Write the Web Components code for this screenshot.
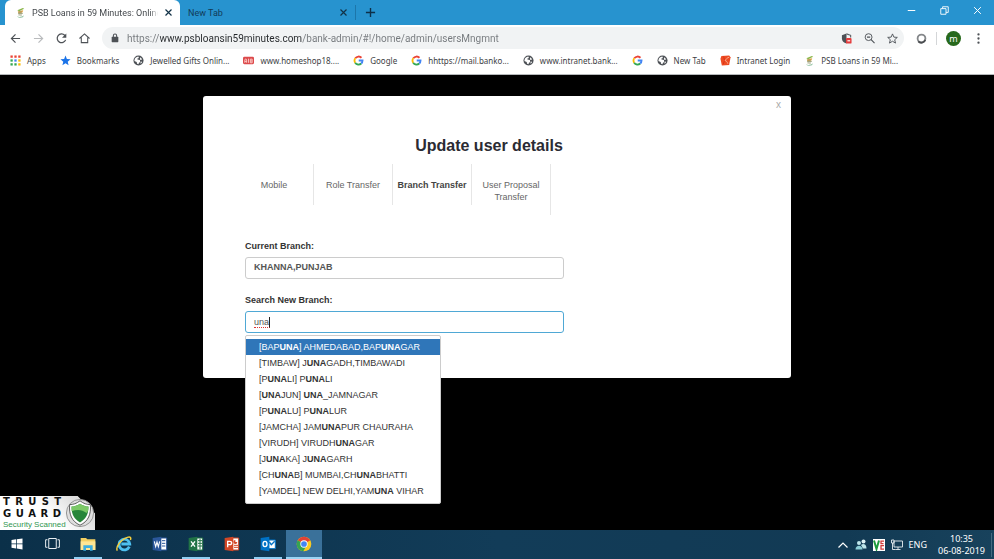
<!DOCTYPE html>
<html lang="en">
<head>
<meta charset="utf-8">
<meta name="viewport" content="width=device-width, initial-scale=1">
<title>PSB Loans in 59 Minutes</title>
<style>
html,body{margin:0;height:100%;background:#000}
body{font-family:"Noto Sans","Open Sans",sans-serif;color:#3c4043}
</style>
</head>
<body>
<desktop-screen>
  <tab-strip slot="top"></tab-strip>
  <address-bar slot="top"></address-bar>
  <bookmarks-bar slot="top"></bookmarks-bar>
  <update-dialog heading="Update user details">
    <step-tabs></step-tabs>
    <branch-field label="Current Branch:" value="KHANNA,PUNJAB" readonly></branch-field>
    <branch-field label="Search New Branch:" value="una" active>
      <suggestion-list query="UNA"></suggestion-list>
    </branch-field>
  </update-dialog>
  <trust-badge></trust-badge>
  <task-bar slot="bottom"></task-bar>
</desktop-screen>
<script>
const globe='<circle cx="12" cy="12" r="11" fill="#4d5156"/><path d="M4 8c3-4 6-5 9-4l-1 3-3 1 1 2 5 1 1 4-3 2-1 3-3-1-1-4-5-2zM16 5l4 4-3 2-2-2zM18 14l2 1-3 4-1-2z" fill="#fff"/>';
const psb='<path d="M5 7 17 2l3 2-11 5z" fill="#8ab648"/><path d="M6 10l12-3-2 5-8 2z" fill="#e3a23c"/><path d="M9 9v10M13 8v12M7 14h10" stroke="#9aa07a" stroke-width="2" fill="none"/><path d="M4 20c5 3 11 2 15-2l-1 4c-4 2-10 2-14-2z" fill="#8fc0a0"/>';
const office=(c,l)=>`<path d="M12 3h10v18H12z" fill="#fff" stroke="${c}" stroke-width="1.5"/><path d="M1 3 14 1v22L1 21z" fill="${c}"/>${l}`;
const ICONS={
 back:'<path d="M22 12H3M12 3l-9 9 9 9" fill="none" stroke="currentColor" stroke-width="2.6"/>',
 forward:'<path d="M2 12h19M12 3l9 9-9 9" fill="none" stroke="currentColor" stroke-width="2.6"/>',
 reload:'<path d="M21 15a9.500 9.500 0 1 1-2-10l2 2" fill="none" stroke="currentColor" stroke-width="2.7"/><path d="M22.500 1v9.500H13z" fill="currentColor"/>',
 home:'<path d="M1 12 12 2l11 10M5 10v11h14V10" fill="none" stroke="currentColor" stroke-width="2.3"/>',
 lock:'<rect x="4" y="9" width="16" height="13" rx="1.500" fill="currentColor"/><path d="M8 10V6.500a4 4 0 0 1 8 0V10" fill="none" stroke="currentColor" stroke-width="2.5"/>',
 close:'<path d="M4 4l16 16M20 4 4 20" fill="none" stroke="currentColor" stroke-width="3.200"/>',
 winclose:'<path d="M3 3l18 18M21 3 3 21" fill="none" stroke="currentColor" stroke-width="2.600"/>',
 plus:'<path d="M12 2v20M2 12h20" fill="none" stroke="currentColor" stroke-width="3"/>',
 minimize:'<path d="M2 12h20" fill="none" stroke="currentColor" stroke-width="2.600"/>',
 restore:'<path d="M2 7h14v15H2zM7 7V2h15v15h-6" fill="none" stroke="currentColor" stroke-width="2.400"/>',
 shield:'<path d="M12 1 2 5v7c0 6 4 9 10 11z" fill="#4d5156"/><path d="M12 2l9 3v5" fill="none" stroke="#5f6368" stroke-width="2.500"/><rect x="11" y="11" width="12" height="12" rx="2" fill="#e43b3b"/><path d="M14 17h6" stroke="#fff" stroke-width="2.500"/>',
 zoom:'<circle cx="10" cy="9" r="7.500" fill="none" stroke="currentColor" stroke-width="2"/><path d="M6.500 9h7M15 14l8 8" stroke="currentColor" stroke-width="2.300"/>',
 star:'<path d="M12 2l3 7 7.500.6-5.700 5 1.800 7.400-6.600-4-6.600 4 1.800-7.400-5.700-5L9 9z" fill="none" stroke="currentColor" stroke-width="2"/>',
 bluestar:'<path d="M12 1l3 7.500 8 .7-6.200 5.300 2 8L12 18.200l-6.800 4.300 2-8L1 9.200l8-.7z" fill="#1a73e8"/>',
 ring:'<circle cx="12" cy="12" r="8.500" fill="#fff" stroke="#85888b" stroke-width="4"/><path d="M5 18.500A9 9 0 0 0 20 15" fill="none" stroke="#4a4d50" stroke-width="4"/>',
 menu:'<circle cx="12" cy="3" r="2.500" fill="currentColor"/><circle cx="12" cy="12" r="2.500" fill="currentColor"/><circle cx="12" cy="21" r="2.500" fill="currentColor"/>',
 apps:['#ea4335','#ea4335','#ea4335','#34a853','#4285f4','#fbbc05','#34a853','#34a853','#fbbc05'].map((c,i)=>`<rect x="${1+(i%3)*8.500}" y="${1+Math.floor(i/3)*8.500}" width="5" height="5" fill="${c}"/>`).join(''),
 globe,psb,
 shop:'<rect x="0" y="4" width="24" height="16" rx="3" fill="#dc4a4c"/><path d="M4 17v-6c0-3 4-3 4 0v6M4 14h4M12 8v9M16 9h4v4h-4zm0 4v4h4v-4" fill="none" stroke="#ffd9d4" stroke-width="1.800"/>',
 google:'<g fill="none" stroke-width="4"><path d="M5 7.200A8.700 8.700 0 0 1 18.500 6" stroke="#ea4335"/><path d="M4.700 16.800a8.700 8.700 0 0 1 .3-9.600" stroke="#fbbc05"/><path d="M18 18.500a8.700 8.700 0 0 1-13.300-1.700" stroke="#34a853"/><path d="M12.500 12h8.300c0 3-1 5-2.800 6.500" stroke="#4285f4"/></g>',
 bob:'<path d="M3 2l17-1 3 4-3 17-16 1L1 8z" fill="#ed4b23"/><path d="M8 3l2 9-3 8" fill="none" stroke="#d92f14" stroke-width="2"/><path d="M20 5c-5 1-6 4-9 7 3 1 5 3 6 7" fill="none" stroke="#ffc9ae" stroke-width="1.600"/>',
 windows:'<path d="M1 4l9-1.300V11H1zM11.500 2.500 23 1v10H11.500zM1 12.500h9v8.300L1 19.500zM11.500 12.500H23v10.300L11.500 21z" fill="#fff"/>',
 taskview:'<path d="M6 4h12v16H6zM4 6H1v12h3M20 6h3v12h-3" fill="none" stroke="#e8eef2" stroke-width="1.600"/>',
 folder:'<path d="M1 3h8l2 2h12v16H1z" fill="#f3cf62"/><path d="M1 8h22v13H1z" fill="#ffe694"/><path d="M5 22v-8h14v8h-4v-4H9v4z" fill="#3daee0"/>',
 ie:'<path d="M20 16a8 8 0 1 1 .6-4H8" fill="none" stroke="#4ec0f0" stroke-width="4.200"/><path d="M2 22C-1 17 7 5 17 2c5-1.500 6 1 4.500 4" fill="none" stroke="#f3cd3d" stroke-width="2.200"/>',
 word:office('#2b579a','<path d="M3.500 8l2 8 2-7 2 7 2-8" stroke="#fff" stroke-width="1.600" fill="none"/><path d="M15 7h5M15 11h5M15 15h5" stroke="#2b579a" stroke-width="1.500"/>'),
 excel:office('#217346','<path d="M4.500 8l6 8M10.500 8l-6 8" stroke="#fff" stroke-width="2"/><path d="M15 7h6M15 11h6M15 15h6M18 4v16" stroke="#217346" stroke-width="1.500"/>'),
 ppt:office('#d24726','<path d="M5.500 17V8h3c4 0 4 5 0 5h-3" stroke="#fff" stroke-width="2" fill="none"/><path d="M15 14h6M15 17h6" stroke="#d24726" stroke-width="1.500"/><path d="M17 6a3 3 0 1 0 3 3h-3z" fill="#d24726"/>'),
 outlook:'<path d="M13 6h10v13H13z" fill="#fff" stroke="#0072c6" stroke-width="1.500"/><path d="M1 3 14 1v22L1 21z" fill="#0072c6"/><ellipse cx="7.500" cy="12" rx="3" ry="4" stroke="#fff" stroke-width="2" fill="none"/><path d="M14 9l3 4 5-5" stroke="#0072c6" stroke-width="2" fill="none"/>',
 chrome:'<circle cx="12" cy="12" r="11" fill="#f9c922"/><path d="M12 12 2.500 6.500a11 11 0 0 1 19 0z" fill="#e24235"/><path d="M12 12 2.500 6.500A11 11 0 0 0 11 23l5-9z" fill="#35a352"/><circle cx="12" cy="12" r="5.500" fill="#fff"/><circle cx="12" cy="12" r="4.300" fill="#4285f4"/>',
 chevron:'<path d="M3 17l9-9 9 9" fill="none" stroke="#fff" stroke-width="2.400"/>',
 people:'<circle cx="8" cy="8" r="4" fill="#bfe6ea"/><path d="M1 21c0-10 14-10 14 0z" fill="#8fd0d8"/><circle cx="17" cy="5" r="4" fill="#dff3f5"/><path d="M12 12c4-4 11-2 11 7h-7z" fill="#bfe6ea"/>',
 vc:'<rect width="24" height="24" fill="#fff"/><path d="M2 3l5 17 5-17" fill="none" stroke="#1c9b3d" stroke-width="4"/><path d="M22 4h-6v5h5M22 13h-6v7h6" fill="none" stroke="#d33c3c" stroke-width="2.500"/>',
 network:'<path d="M6 4h17v12H6zM14 16v5M9 21h10M1 2h5v6H1zM3 8v13h6" fill="none" stroke="#e8eef2" stroke-width="1.800"/>'
};
const define=(name,css,html)=>customElements.define(name,class extends HTMLElement{
  connectedCallback(){
    if(this.shadowRoot)return;
    const t=document.createElement('template');
    t.innerHTML=`<style>*{box-sizing:border-box}button{font:inherit;color:inherit;border:0;background:none;padding:0;display:grid;place-items:center}a{color:inherit;text-decoration:none}${css}</style>${typeof html==='function'?html(this):html}`;
    this.attachShadow({mode:'open'}).append(t.content.cloneNode(true));
  }
});
define('app-icon',':host{display:block;flex:none;width:var(--size,11px);height:var(--size,11px)}svg{display:block;width:100%;height:100%}',
 e=>`<svg viewBox="0 0 24 24" aria-hidden="true">${ICONS[e.getAttribute('name')]}</svg>`);
define('desktop-screen',`:host{display:flex;flex-direction:column;min-height:100vh}
 main{flex:1;display:flex;flex-direction:column;background:#000;padding-top:21px}
 header{border-bottom:1px solid #b5b8ba}
 ::slotted(trust-badge){margin-top:auto}`,
 '<header><slot name="top"></slot></header><main><slot></slot></main><slot name="bottom"></slot>');
define('browser-tab',`:host{display:flex;align-items:center;width:175px;height:25px;padding:0 7px 0 8px;font-family:Roboto,sans-serif;font-size:9px;color:#123b58;gap:6px}
 :host([selected]){background:#fff;color:#45494d;border-radius:6px 6px 0 0;padding-left:10px}
 a{flex:1;overflow:hidden;white-space:nowrap}
 :host([selected]) a{-webkit-mask:linear-gradient(to left,transparent,#000 8px);mask:linear-gradient(to left,transparent,#000 8px)}
 button{--size:9px;color:#123247;margin-left:auto}`,
 e=>`${e.hasAttribute('selected')?'<app-icon name="psb"></app-icon>':''}<a href="#"><slot></slot></a><button aria-label="Close tab"><app-icon name="close"></app-icon></button>`);
define('tab-strip',`:host{display:flex;align-items:center;background:#2793cf;height:25px;padding-left:5px}
 .new{border-left:1px solid #1c76aa;height:15px;padding-left:9px;color:#0d2f48}
 .win{display:flex;margin-left:auto;gap:24px;padding:0 12px 4px 0;color:#fff;--size:9px}`,
 '<browser-tab selected>PSB Loans in 59 Minutes: Online</browser-tab><browser-tab>New Tab</browser-tab><button class="new" aria-label="New tab"><app-icon name="plus"></app-icon></button><div class="win"><button aria-label="Minimize"><app-icon name="minimize"></app-icon></button><button aria-label="Restore"><app-icon name="restore"></app-icon></button><button aria-label="Close"><app-icon name="winclose"></app-icon></button></div>');
define('address-bar',`:host{display:flex;align-items:center;height:26px;padding:0 10px;background:#fff;gap:12px;color:#4d5156}
 .fwd{color:#b9bbbd}
 form{flex:1;display:flex;align-items:center;gap:7px;height:22px;margin:0;border-radius:11px;background:#f1f3f4;padding:0 6px 0 8px;--size:10px}
 input{flex:1;min-width:0;border:0;outline:0;padding:0;font:10px Roboto,sans-serif;color:transparent;background:linear-gradient(90deg,#74787c 33px,#25282b 33px 175px,#74787c 175px);background-clip:text;-webkit-background-clip:text}
 .tools{display:flex;gap:12px;--size:11px}
 .side{display:flex;align-items:center;gap:9px}
 i{width:1px;height:13px;background:#d4d6d8}
 .me{width:15px;height:15px;border-radius:50%;background:#27691c;color:#fff;font-size:9px;line-height:15px}`,
 `<button aria-label="Back"><app-icon name="back"></app-icon></button><button class="fwd" aria-label="Forward"><app-icon name="forward"></app-icon></button><button aria-label="Reload"><app-icon name="reload"></app-icon></button><button aria-label="Home"><app-icon name="home"></app-icon></button>
 <form><app-icon name="lock"></app-icon><input aria-label="Address" spellcheck="false" value="https://www.psbloansin59minutes.com/bank-admin/#!/home/admin/usersMngmnt"><div class="tools"><button type="button" aria-label="Blocked content"><app-icon name="shield"></app-icon></button><button type="button" aria-label="Zoom"><app-icon name="zoom"></app-icon></button><button type="button" aria-label="Bookmark"><app-icon name="star"></app-icon></button></div></form>
 <div class="side"><button aria-label="Extension"><app-icon name="ring"></app-icon></button><i></i><button class="me" aria-label="Profile">m</button></div><button aria-label="Menu"><app-icon name="menu"></app-icon></button>`);
define('bookmark-link',':host{display:block;min-width:0}a{display:flex;align-items:center;gap:6px;font-size:8px;white-space:nowrap;color:#3c4043}',
 e=>`<a href="#" aria-label="${e.textContent||'Google'}"><app-icon name="${e.getAttribute('icon')}"></app-icon>${e.textContent?'<span><slot></slot></span>':''}</a>`);
define('bookmarks-bar',':host{display:flex;align-items:center;height:23px;padding:0 10px 4px;gap:14px;background:#fff;overflow:hidden;box-sizing:border-box}',
 [['apps','Apps'],['bluestar','Bookmarks'],['globe','Jewelled Gifts Onlin...'],['shop','www.homeshop18....'],['google','Google'],['google','hhttps://mail.banko...'],['globe','www.intranet.bank...'],['google',''],['globe','New Tab'],['bob','Intranet Login'],['psb','PSB Loans in 59 Mi...']].map(([i,t])=>`<bookmark-link icon="${i}">${t}</bookmark-link>`).join(''));
define('update-dialog',`:host{display:block;width:100%;max-width:588px;margin:0 auto;background:#fff;border-radius:3px;font-family:"Liberation Sans",Arial,sans-serif;color:#333}
 section{position:relative;padding:40px 42px 45px}
 h1{margin:0;padding-right:16px;font-size:16px;line-height:20px;text-align:center;color:#2b2b33}
 .x{position:absolute;top:4px;right:10px;font-size:10px;line-height:10px;color:#aaa}`,
 e=>`<section role="dialog" aria-label="${e.getAttribute('heading')}"><button class="x" aria-label="Close">x</button><h1>${e.getAttribute('heading')}</h1><slot></slot></section>`);
define('step-tabs',`:host{display:block;margin:8px 0 25px -10px}
 nav{display:flex;align-items:flex-start}
 a{flex:0 1 79px;min-height:41px;padding:15px 8px 12px;border-right:1px solid #e6e6e6;font-size:9px;line-height:12px;text-align:center;color:#666}
 .on{font-weight:bold;color:#444;padding:15px 0 13px;white-space:nowrap}`,
 '<nav><a href="#">Mobile</a><a href="#">Role Transfer</a><a href="#" class="on" aria-current="step">Branch Transfer</a><a href="#">User Proposal Transfer</a></nav>');
define('branch-field',`:host{display:block;position:relative;width:100%;max-width:319px;margin-bottom:15px}
 :host([active]){margin-bottom:0}
 label{display:block;font-size:9px;font-weight:bold;line-height:12px;margin-bottom:5px;color:#333}
 input{display:block;width:100%;height:22px;border:1px solid #ccc;border-radius:3px;padding:0 8px 1px;font:9px "Liberation Sans",Arial,sans-serif;color:#555;outline:0}
 input[readonly]{font-weight:bold;padding-bottom:3px}
 :host([active]) input{border-color:#4fa8d5}
 .mark{position:absolute;left:9px;bottom:5px;width:16px;height:11px;border-right:1px solid #222;border-bottom:1px dotted #d33}`,
 e=>`<label for="f">${e.getAttribute('label')}</label><input id="f" spellcheck="false" value="${e.getAttribute('value')}"${e.hasAttribute('readonly')?' readonly':''}>${e.hasAttribute('active')?'<span class="mark"></span>':''}<slot></slot>`);
define('suggestion-list',`:host{position:absolute;top:100%;left:0;margin-top:2px;z-index:2}
 ul{margin:0;padding:3px 0 4px;list-style:none;background:#fff;border:1px solid #ccc;border-radius:2px}
 button{display:block;width:100%;text-align:left;padding:0 16px 0 13px;font-size:9px;line-height:16px;color:#333;white-space:nowrap}
 .on{background:#2f76b9;color:#fff}`,
 e=>{const q=e.getAttribute('query');return '<ul>'+['[BAPUNA] AHMEDABAD,BAPUNAGAR','[TIMBAW] JUNAGADH,TIMBAWADI','[PUNALI] PUNALI','[UNAJUN] UNA_JAMNAGAR','[PUNALU] PUNALUR','[JAMCHA] JAMUNAPUR CHAURAHA','[VIRUDH] VIRUDHUNAGAR','[JUNAKA] JUNAGARH','[CHUNAB] MUMBAI,CHUNABHATTI','[YAMDEL] NEW DELHI,YAMUNA VIHAR'].map((s,i)=>`<li><button${i?'':' class="on"'}>${s.replaceAll(q,`<b>${q}</b>`)}</button></li>`).join('')+'</ul>'});
define('trust-badge',`:host{display:block}
 a{display:flex;align-items:center;width:fit-content;height:34px;padding-left:3px;background:linear-gradient(45deg,#fff 50%,#ddd 82%,#ddd 86%,transparent 87%);font-family:"Liberation Sans",Arial,sans-serif}
 strong{font:bold 10px/12px "DejaVu Sans",sans-serif;color:#111;width:58px;display:flex;justify-content:space-between}
 small{display:block;font-size:8px;line-height:10px;color:#2f9650;white-space:nowrap;width:58px}
 svg{width:30px;height:34px;margin-left:4px}`,
 `<a href="#" aria-label="Trust Guard Security Scanned"><span><strong>${[...'TRUST'].map(c=>`<span>${c}</span>`).join('')}</strong><strong>${[...'GUARD'].map(c=>`<span>${c}</span>`).join('')}</strong><small>Security Scanned</small></span>
 <svg viewBox="0 0 32 34" aria-hidden="true"><circle cx="16" cy="17" r="14.500" fill="#dedede" stroke="#909090"/><path d="M16 4c4 3 7 4 11 4 1 10-2 18-11 22C7 26 4 18 5 8c4 0 7-1 11-4z" fill="#fff" stroke="#555"/><path d="M16 7c3 2 6 3 9 3 0 8-2 13-9 17-7-4-9-9-9-17 3 0 6-1 9-3z" fill="#27863a"/><path d="M16 7c3 2 6 3 9 3 0 3 0 5-2 7-5-4-10-4-16-2V10c3 0 6-1 9-3z" fill="#7cc967"/></svg></a>`);
define('task-bar',`:host{display:flex;align-items:stretch;height:29px;background:linear-gradient(90deg,#0b3049,#123c58 50%,#123a54 85%,#18425c);color:#fff;padding-right:2px}
 .apps{display:flex;--size:16px}
 .apps button{width:36px;border-bottom:2px solid transparent}
 .apps .open{background:linear-gradient(#8fcdf2,#8fcdf2) center bottom/28px 2px no-repeat border-box}
 .apps .now{background:#3a719a;border-bottom-color:#9bd4f5}
 .apps .sys{--size:12px;width:34px}
 .apps .view{--size:15px}
 .tray{display:flex;align-items:center;margin-left:auto;gap:6px;font-size:9px}
 .clock{display:block;text-align:center;line-height:12px;padding:0 6px 0 5px;border-right:1px solid #456a80;white-space:nowrap}
 .tray .ico{--size:12px}`,
 '<div class="apps">'+[['windows','Start','sys'],['taskview','Task view','view'],['folder','File Explorer','open'],['ie','Internet Explorer',''],['word','Word',''],['excel','Excel','open'],['ppt','PowerPoint',''],['outlook','Outlook','open'],['chrome','Chrome','now']].map(([i,l,c])=>`<button class="${c}" aria-label="${l}"><app-icon name="${i}"></app-icon></button>`).join('')+'</div><div class="tray">'+[['chevron','Show hidden icons'],['people','People'],['vc','Antivirus'],['network','Network']].map(([i,l])=>`<button class="ico" aria-label="${l}"><app-icon name="${i}"></app-icon></button>`).join('')+'<button>ENG</button><button class="clock"><time>10:35</time><br><time>06-08-2019</time></button></div>');
</script>
</body>
</html>
